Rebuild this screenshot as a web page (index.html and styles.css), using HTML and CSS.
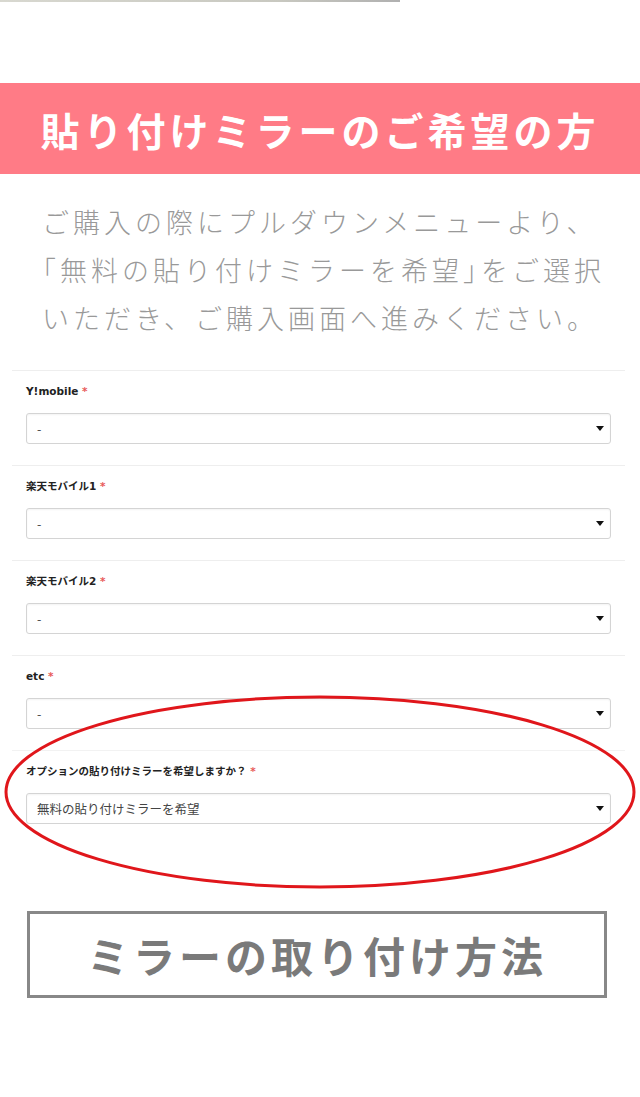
FILE: index.html
```html
<!DOCTYPE html>
<html lang="ja">
<head>
    <meta charset="UTF-8">
    <meta name="viewport" content="width=device-width, initial-scale=1.0">
    <title>貼り付けミラーのご希望の方</title>
    <link rel="stylesheet" href="styles.css">
</head>
<body>
    <div class="page">
        <div class="top-edge"></div>

        <h2 class="banner">貼り付けミラーのご希望の方</h2>

        <p class="lead">
            ご購入の際にプルダウンメニューより、<br>
            <span class="open-br">「</span>無料の貼り付けミラーを希望<span class="close-br">」</span>をご選択<br>
            いただき、ご購入画面へ進みください。
        </p>

        <form class="options">
            <div class="field">
                <label class="field-label">Y!mobile <span class="req">*</span></label>
                <div class="select-wrap">
                    <select class="select"><option>-</option></select>
                </div>
            </div>
            <div class="field">
                <label class="field-label">楽天モバイル1 <span class="req">*</span></label>
                <div class="select-wrap">
                    <select class="select"><option>-</option></select>
                </div>
            </div>
            <div class="field">
                <label class="field-label">楽天モバイル2 <span class="req">*</span></label>
                <div class="select-wrap">
                    <select class="select"><option>-</option></select>
                </div>
            </div>
            <div class="field">
                <label class="field-label">etc <span class="req">*</span></label>
                <div class="select-wrap">
                    <select class="select"><option>-</option></select>
                </div>
            </div>
            <div class="field">
                <label class="field-label">オプションの貼り付けミラーを希望しますか？ <span class="req">*</span></label>
                <div class="select-wrap">
                    <select class="select"><option>無料の貼り付けミラーを希望</option></select>
                </div>
            </div>
        </form>

        <div class="howto">ミラーの取り付け方法</div>

        <!-- 赤丸の注釈 -->
        <svg class="circle-mark" width="640" height="200" viewBox="0 0 640 200">
            <ellipse cx="320" cy="97" rx="314" ry="95" fill="none" stroke="#e0161b" stroke-width="3"/>
        </svg>
    </div>
</body>
</html>
```

FILE: styles.css
```css
body {
    margin: 0;
    background-color: #fff;
    font-family: "Noto Sans CJK JP", "Noto Sans", sans-serif;
    color: #333;
}

.page {
    position: relative;
    width: 640px;
    min-height: 1097px;
}

.top-edge {
    width: 400px;
    height: 2px;
    background: linear-gradient(to right, #d8d8d0, #c8c8c0 70%, #b0b0b0);
}

.banner {
    margin: 81px 0 0;
    height: 91px;
    background-color: #ff7b86;
    color: #fff;
    font-size: 39px;
    font-weight: 700;
    letter-spacing: 4px;
    display: flex;
    justify-content: center;
    align-items: center;
}

.lead {
    margin: 0;
    padding: 24px 0 0 42px;
    font-size: 27px;
    line-height: 48px;
    letter-spacing: 4px;
    font-weight: 300;
    color: #999;
}

/* 括弧は半角ぶんに詰める */
.open-br {
    margin-left: -13px;
}

.close-br {
    letter-spacing: -9px;
}

.options {
    margin-top: 28px;
    padding: 0 15px 0 12px;
}

.field {
    border-top: 1px solid #eee;
    padding: 12px 14px 21px 14px;
}

.field:last-child {
    border-top-color: #f2f2f2;
}

.field-label {
    display: block;
    height: 16px;
    line-height: 16px;
    margin-bottom: 14px;
    font-family: "DejaVu Sans", "Noto Sans CJK JP", sans-serif;
    font-size: 10.5px;
    font-weight: 700;
    color: #222;
}

.req {
    color: #e85a5a;
}

.select-wrap {
    position: relative;
}

.select-wrap::after {
    content: "";
    position: absolute;
    right: 7px;
    top: 13px;
    border-left: 4px solid transparent;
    border-right: 4px solid transparent;
    border-top: 5px solid #111;
    pointer-events: none;
}

.select {
    display: block;
    width: 100%;
    height: 31px;
    margin: 0;
    padding: 0 24px 0 10px;
    border: 1px solid #d4d4d4;
    border-radius: 3px;
    background-color: #fff;
    box-shadow: inset 0 1px 2px rgba(0, 0, 0, 0.05);
    -webkit-appearance: none;
    appearance: none;
    font-family: "Noto Sans CJK JP", sans-serif;
    font-size: 12.5px;
    color: #444;
}

.howto {
    margin: 66px 0 0 27px;
    width: 574px;
    height: 81px;
    border: 3px solid #888;
    display: flex;
    justify-content: center;
    align-items: center;
    font-size: 42px;
    font-weight: 700;
    letter-spacing: 4px;
    color: #7a7a7a;
}

.circle-mark {
    position: absolute;
    left: 0;
    top: 695px;
}
```
